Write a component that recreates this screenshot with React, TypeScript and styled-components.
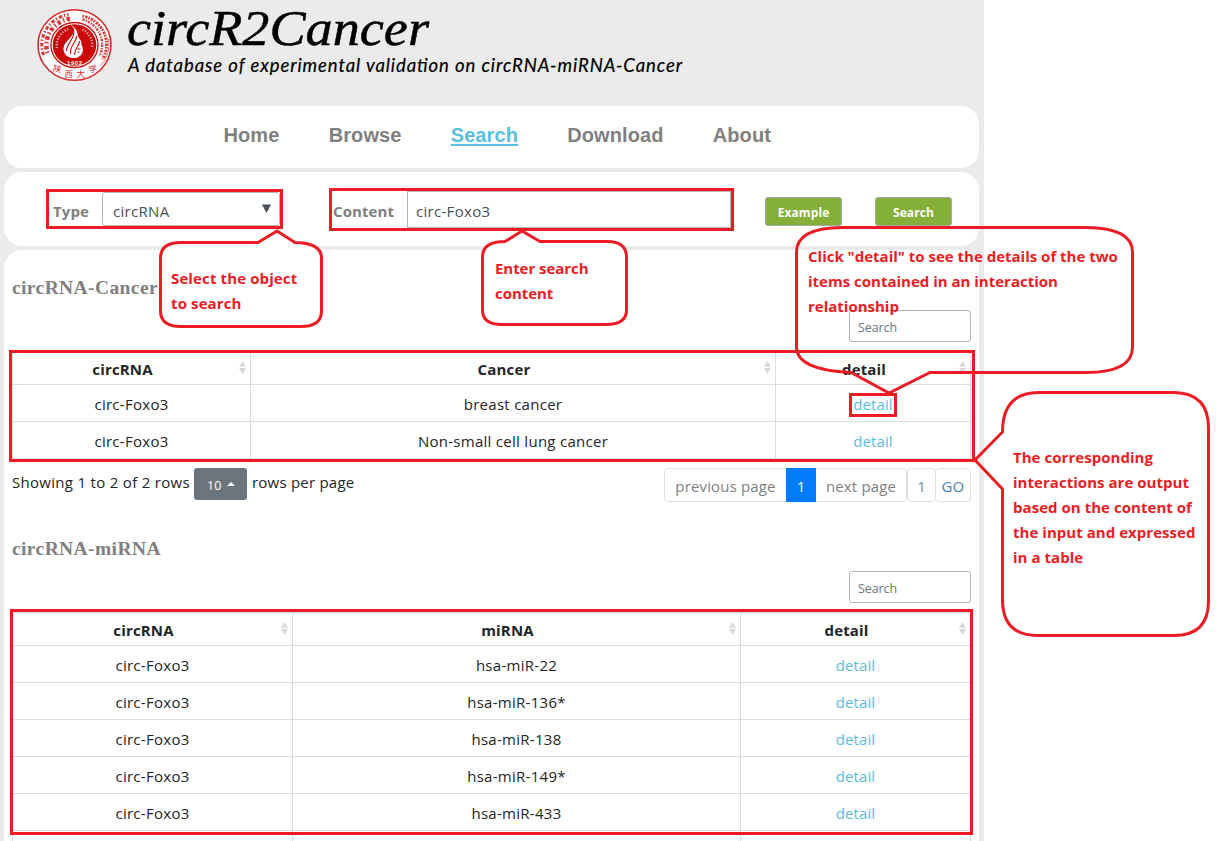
import React from "react";
import styled, { createGlobalStyle } from "styled-components";

const RED = "#ed1c24";
const UI = `"Open Sans", "Noto Sans", sans-serif`;

const Global = createGlobalStyle`
  * { box-sizing: border-box; }
  html, body { margin: 0; padding: 0; background: #fff; }
  body { width: 1216px; height: 841px; overflow: hidden; font-family: ${UI}; font-size: 15px; color: #212529; }
`;

const Stage = styled.div`
  position: relative;
  width: 1216px;
  height: 841px;
  overflow: hidden;
`;
const Page = styled.div`
  width: 984px;
  height: 841px;
  background: #ebebeb;
  padding: 0 5px 0 4px;
  display: flex;
  flex-direction: column;
  gap: 4px;
  overflow: hidden;
`;
const Header = styled.header`
  height: 102px;
  flex: none;
  svg { display: block; }
`;
const Panel = styled.section<{ $h?: number }>`
  flex: none;
  height: ${(p) => (p.$h ? p.$h + "px" : "620px")};
  background: #fff;
  border-radius: 18px;
`;
const Nav = styled(Panel).attrs({ as: "nav" })`
  display: flex;
  gap: 49.2px;
  align-items: center;
  padding: 0 0 5px 219.5px;
`;
const NavLink = styled.a<{ $active?: boolean }>`
  font: bold 20px/24px "Liberation Sans", Arial, sans-serif;
  letter-spacing: 0.1px;
  color: ${(p) => (p.$active ? "#5bc0de" : "#808080")};
  text-decoration: ${(p) => (p.$active ? "underline" : "none")};
  text-decoration-thickness: 2px;
  text-underline-offset: 2px;
`;
const SearchBar = styled(Panel)`
  display: flex;
  align-items: flex-start;
  padding: 17px 0 0 42px;
`;
const Marked = styled.div<{ $w: number; $h: number; $ml?: number; $mt?: number }>`
  width: ${(p) => p.$w}px;
  height: ${(p) => p.$h}px;
  margin-left: ${(p) => p.$ml || 0}px;
  margin-top: ${(p) => p.$mt || 0}px;
  border: 3px solid ${RED};
  display: flex;
  align-items: center;
`;
const Label = styled.label<{ $w: number; $pl: number; $pt: number }>`
  width: ${(p) => p.$w}px;
  padding-left: ${(p) => p.$pl}px;
  padding-top: ${(p) => p.$pt}px;
  flex: none;
  font-weight: 700;
  font-size: 15px;
  letter-spacing: 0.1px;
  color: #808080;
  white-space: nowrap;
`;
const Field = styled.div<{ $pad: number; $pt: number; $r?: number }>`
  flex: 1;
  height: 100%;
  border: 1px solid #b5b5b5;
  border-radius: ${(p) => p.$r || 0}px;
  padding: ${(p) => p.$pt}px 8px 0 ${(p) => p.$pad}px;
  display: flex;
  align-items: center;
  justify-content: space-between;
  color: #495057;
  letter-spacing: 0.3px;
  svg { margin-top: -4px; }
`;
const Green = styled.button<{ $ml: number }>`
  width: 77px;
  height: 29px;
  margin: 8px 0 0 ${(p) => p.$ml}px;
  padding: 1px 0 0;
  background: #84b03a;
  border: 1px solid #a5a9a0;
  border-radius: 3px;
  color: #fff;
  font: bold 12px ${UI};
  letter-spacing: 0.1px;
`;
const Results = styled(Panel)`
  padding: 22px 8px 0;
`;
const Block = styled.div`
  height: 261px;
`;
const Title = styled.h3`
  margin: 0;
  height: 38px;
  font: bold 19.5px/31px "Liberation Serif", serif;
  color: #808080;
  letter-spacing: 0.4px;
`;
const FilterRow = styled.div`
  display: flex;
  justify-content: flex-end;
  height: 41px;
`;
const Filter = styled.div`
  width: 122px;
  height: 32px;
  border: 1px solid #b5b5b5;
  border-radius: 3px;
  padding: 1px 8px 0;
  font-size: 12.5px;
  line-height: 32px;
  letter-spacing: -0.1px;
  color: #6c757d;
`;
const Table = styled.div`
  width: 959px;
  border: 1px solid #dcdcdc;
`;
const Row = styled.div<{ $cols: string; $head?: boolean }>`
  display: grid;
  grid-template-columns: ${(p) => p.$cols};
  height: ${(p) => (p.$head ? 33 : 37)}px;
  border-bottom: 1px solid #dcdcdc;
  &:last-child { border-bottom: 0; height: 36px; }
`;
const Cell = styled.div`
  display: flex;
  align-items: center;
  justify-content: center;
  padding-top: 2px;
  letter-spacing: 0.28px;
  border-right: 1px solid #dcdcdc;
  &:last-child { border-right: 0; }
`;
const HeadCell = styled(Cell)`
  font-weight: 700;
  letter-spacing: 0.15px;
  padding: 1px 4px 0 13px;
  span { flex: 1; text-align: center; padding-right: 20px; }
  svg { margin-top: -2px; flex: none; }
`;
const Link = styled.a`
  color: #5bbce0;
  letter-spacing: 0.1px;
`;
const Footer = styled.div`
  display: flex;
  height: 34px;
  margin-top: 9px;
`;
const Info = styled.span<{ $w?: number }>`
  width: ${(p) => (p.$w ? p.$w + "px" : "auto")};
  line-height: 29px;
  letter-spacing: ${(p) => (p.$w ? 0.3 : 0.22)}px;
  white-space: nowrap;
`;
const SizeButton = styled.div`
  width: 53px;
  height: 32px;
  margin-right: 5px;
  border-radius: 3px;
  background: #6c757d;
  color: #fff;
  font-size: 12.5px;
  display: flex;
  align-items: center;
  padding: 3px 0 0 13px;
  gap: 6px;
  svg { margin-top: -3px; }
`;
const Pager = styled.div`
  display: flex;
  margin-left: auto;
  height: 34px;
`;
const PageGroup = styled.div<{ $overlap?: boolean }>`
  display: flex;
  height: 34px;
  border: 1px solid #dee0e3;
  border-radius: 4px;
  margin-left: ${(p) => (p.$overlap ? -1 : 0)}px;
`;
const PageItem = styled.div<{ $w: number; $active?: boolean; $c?: string }>`
  width: ${(p) => p.$w}px;
  height: ${(p) => (p.$active ? 34 : 32)}px;
  margin-top: ${(p) => (p.$active ? -1 : 0)}px;
  background: ${(p) => (p.$active ? "#007bff" : "transparent")};
  color: ${(p) => (p.$active ? "#fff" : p.$c || "#808080")};
  display: flex;
  align-items: center;
  justify-content: center;
  padding-top: 2px;
  letter-spacing: 0.15px;
  white-space: nowrap;
`;
const Overlay = styled.svg`
  position: absolute;
  left: 0;
  top: 0;
`;
const Note = styled.p<{ $x: number; $y: number; $ls?: number }>`
  position: absolute;
  left: ${(p) => p.$x}px;
  top: ${(p) => p.$y}px;
  margin: 0;
  color: ${RED};
  font-weight: 700;
  font-size: 15px;
  line-height: 25px;
  letter-spacing: ${(p) => p.$ls || 0}px;
  white-space: pre;
`;

const SortIcon = () => (
  <svg width="7" height="13" viewBox="0 0 7 13" fill="#d8d8d8">
    <path d="M3.5 0 7 5.8H0zM0 7h7L3.5 13z" />
  </svg>
);

const Seal = () => (
  <g transform="translate(70.5 45)">
    <ellipse rx="36.5" ry="35.3" fill="#fff" stroke="#d42a2a" strokeWidth="1.6" />
    <g fill="none" stroke="#d63a3a">
      <path d="M-31 10A32 31 0 0 1-6-30.500" strokeWidth="3" strokeDasharray="3.500 2 1.300 2" />
      <path d="M-27 8A28 27 0 0 1-3-26.500" strokeWidth="4.500" strokeDasharray="1.500 2.200 3.500 2.600" />
      <path d="M8-29A30 29 0 0 1 28 14" strokeWidth="3" strokeDasharray="1.600 1.200 2.400 .9" />
      <path d="M8-25.500A26.500 26 0 0 1 25 11" strokeWidth="2.500" strokeDasharray="2.200 1.300 1.200 1" />
      <path d="M34-6A34 33 0 0 1 26 21" strokeWidth=".7" />
    </g>
    <ellipse rx="23.500" ry="22.500" fill="#fff" stroke="#c81010" strokeWidth="1.300" />
    <ellipse rx="21.800" ry="20.800" fill="#cc0808" />
    <path d="M-17.500 3A18 17.500 0 0 1-6-16M8-15.500A18 17.500 0 0 1 17.500 3" fill="none" stroke="#fff" strokeWidth="2.400" strokeDasharray="1.300 1.500" opacity=".65" />
    <path fill="#fff" d="M-4-20C4-15-3-9-9-2-14 5-9 12-3 13 9 14 10 4 7 0 8-5 2-8 3-12 2-16-1-19-4-20Z" />
    <path fill="none" stroke="#cc0808" strokeWidth="1.100" d="M-1-15C2-8-8-2-8 6M2-9C3-4-5 0-4 9M5-4C5 1 0 3 0 10M3 4H6M3 7H5" />
    <g fill="#d42a2a" fontFamily='"Noto Sans CJK SC", sans-serif' fontSize="8.500">
      <text x="-22" y="26" transform="rotate(12 -22 26)">陕</text>
      <text x="-10" y="32">西</text>
      <text x="2" y="32">大</text>
      <text x="15" y="28" transform="rotate(-15 15 28)">学</text>
    </g>
    <text x="-7.500" y="19.500" fill="#fff" fontFamily="Liberation Sans" fontWeight="700" fontSize="6" textLength="15">1902</text>
  </g>
);

const NAV = ["Home", "Browse", "Search", "Download", "About"];

function DataTable({ cols, heads, rows }: { cols: string; heads: string[]; rows: string[][] }) {
  return (
    <Table>
      <Row $cols={cols} $head>
        {heads.map((h) => (
          <HeadCell key={h}><span>{h}</span><SortIcon /></HeadCell>
        ))}
      </Row>
      {rows.map((r, i) => (
        <Row $cols={cols} key={i}>
          {r.map((c, j) => (
            <Cell key={j}>{c}</Cell>
          ))}
          <Cell>{r[0] ? <Link>detail</Link> : null}</Cell>
        </Row>
      ))}
    </Table>
  );
}

const FOXO = "circ-Foxo3";

export default function App() {
  return (
    <Stage>
      <Global />
      <Page>
        <Header>
          <svg width="740" height="102">
            <Seal />
            <text x="123" y="45" fontFamily='"Liberation Serif", serif' fontStyle="italic" fontSize="51" stroke="#000" strokeWidth=".5" textLength="302" lengthAdjust="spacingAndGlyphs">circR2Cancer</text>
            <text x="124" y="72" fontFamily="Lato, sans-serif" fontStyle="italic" fontSize="18.500" stroke="#000" strokeWidth=".2" textLength="554" lengthAdjust="spacing">A database of experimental validation on circRNA-miRNA-Cancer</text>
          </svg>
        </Header>
        <Nav $h={62}>
          {NAV.map((n) => (
            <NavLink key={n} $active={n === "Search"}>{n}</NavLink>
          ))}
        </Nav>
        <SearchBar $h={74}>
          <Marked $w={237} $h={40}>
            <Label $w={53} $pl={4} $pt={3}>Type</Label>
            <Field $pad={10} $pt={3} $r={3}>
              circRNA
              <svg width="9" height="9"><path d="M0 .5h9L4.500 9z" fill="#495057" /></svg>
            </Field>
          </Marked>
          <Marked $w={405} $h={43} $ml={46} $mt={-1}>
            <Label $w={75} $pl={1} $pt={3}>Content</Label>
            <Field $pad={8} $pt={3}>{FOXO}</Field>
          </Marked>
          <Green $ml={31}>Example</Green>
          <Green $ml={33}>Search</Green>
        </SearchBar>
        <Results>
          <Block>
            <Title>circRNA-Cancer</Title>
            <FilterRow><Filter>Search</Filter></FilterRow>
            <DataTable
              cols="238px 525px 1fr"
              heads={["circRNA", "Cancer", "detail"]}
              rows={[[FOXO, "breast cancer"], [FOXO, "Non-small cell lung cancer"]]}
            />
            <Footer>
              <Info $w={182}>Showing 1 to 2 of 2 rows</Info>
              <SizeButton>
                10
                <svg width="8" height="4"><path d="M0 4 4 0 8 4z" fill="#fff" /></svg>
              </SizeButton>
              <Info>rows per page</Info>
              <Pager>
                <PageGroup>
                  <PageItem $w={121}>previous page</PageItem>
                  <PageItem $w={30} $active>1</PageItem>
                  <PageItem $w={90}>next page</PageItem>
                </PageGroup>
                <PageGroup>
                  <PageItem $w={27} $c="#6c8ea8">1</PageItem>
                </PageGroup>
                <PageGroup $overlap>
                  <PageItem $w={34} $c="#4682b4">GO</PageItem>
                </PageGroup>
              </Pager>
            </Footer>
          </Block>
          <Block>
            <Title>circRNA-miRNA</Title>
            <FilterRow><Filter>Search</Filter></FilterRow>
            <DataTable
              cols="280px 448px 1fr"
              heads={["circRNA", "miRNA", "detail"]}
              rows={[
                [FOXO, "hsa-miR-22"],
                [FOXO, "hsa-miR-136*"],
                [FOXO, "hsa-miR-138"],
                [FOXO, "hsa-miR-149*"],
                [FOXO, "hsa-miR-433"],
                ["", ""],
              ]}
            />
          </Block>
        </Results>
      </Page>
      <Overlay width="1216" height="841" fill="none" stroke={RED} strokeWidth="3">
        <rect x="10.500" y="351.500" width="963" height="109" />
        <rect x="11.500" y="610.500" width="960" height="223" />
        <rect x="850.500" y="394.500" width="45" height="21" />
        <path fill="#fff" d="M181 242.500H258L277 231 295 242.500Q321.500 243 321.500 258V311Q321.500 326.500 301 326.500H181Q160.500 326.500 160.500 311V258Q160.500 242.500 181 242.500Z" />
        <path fill="#fff" d="M505 241.500 522 231 540 241.500H607Q626.500 241.500 626.500 257V310Q626.500 324.500 606 324.500H502Q482.500 324.500 482.500 310V257Q482.500 241.500 505 241.500Z" />
        <path d="M842 227.500H1086Q1132.500 228 1132.500 252V347Q1132.500 372.500 1086 372.500H930L889 393 851 372.500Q796.500 370 796.500 347V252Q796.500 228 842 227.500Z" />
        <path d="M1038 392.500H1174Q1208.500 393 1208.500 428V601Q1208.500 635.500 1174 635.500H1038Q1002.500 635.500 1002.500 600V489L975 460 1002.500 432Q1002.500 393 1038 392.500Z" />
      </Overlay>
      <Note $x={171} $y={266} $ls={0.12}>{"Select the object\nto search"}</Note>
      <Note $x={495} $y={256} $ls={-0.05}>{"Enter search\ncontent"}</Note>
      <Note $x={808} $y={244}>{"Click \"detail\" to see the details of the two\nitems contained in an interaction\nrelationship"}</Note>
      <Note $x={1013} $y={445} $ls={0.04}>{"The corresponding\ninteractions are output\nbased on the content of\nthe input and expressed\nin a table"}</Note>
    </Stage>
  );
}
